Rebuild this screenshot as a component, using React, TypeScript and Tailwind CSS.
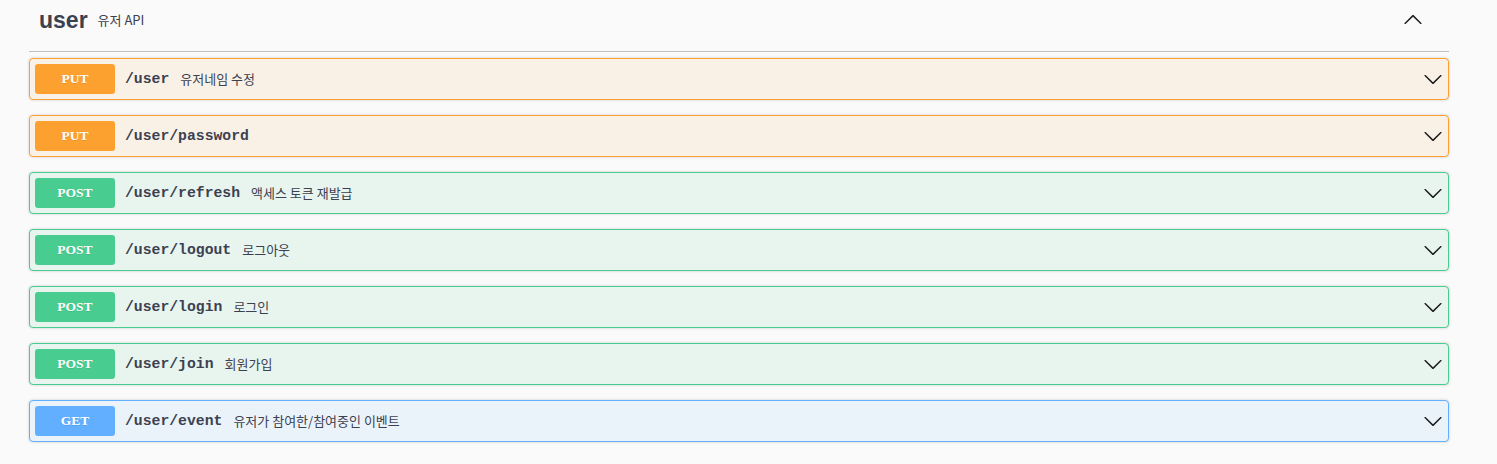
import { ReactNode } from 'react'

type Method = 'PUT' | 'POST' | 'GET'

const ops: { method: Method; path: string; summary?: string }[] = [
  { method: 'PUT', path: '/user', summary: '유저네임 수정' },
  { method: 'PUT', path: '/user/password' },
  { method: 'POST', path: '/user/refresh', summary: '액세스 토큰 재발급' },
  { method: 'POST', path: '/user/logout', summary: '로그아웃' },
  { method: 'POST', path: '/user/login', summary: '로그인' },
  { method: 'POST', path: '/user/join', summary: '회원가입' },
  { method: 'GET', path: '/user/event', summary: '유저가 참여한/참여중인 이벤트' },
]

const styles: Record<Method, { row: string; badge: string }> = {
  PUT: { row: 'border-[#fca130] bg-[#faf1e6]', badge: 'bg-[#fca130]' },
  POST: { row: 'border-[#49cc90] bg-[#e8f5ef]', badge: 'bg-[#49cc90]' },
  GET: { row: 'border-[#61affe] bg-[#ebf3fa]', badge: 'bg-[#61affe]' },
}

function Arrow({ up = false }: { up?: boolean }) {
  return (
    <svg width="20" height="20" viewBox="0 0 20 20" className={up ? 'rotate-180' : ''} fill="#1b1b1b">
      <path d="M17.418 6.109c.272-.268.709-.268.979 0s.271.701 0 .969l-7.908 7.83c-.27.268-.707.268-.979 0l-7.908-7.83c-.27-.268-.27-.701 0-.969.271-.268.709-.268.979 0L10 13.25l7.418-7.141z" />
    </svg>
  )
}

function OpRow({ method, path, summary }: { method: Method; path: string; summary?: string }): ReactNode {
  const s = styles[method]
  return (
    <div className={`flex h-[42px] items-center rounded-[4px] border p-[5px] shadow-[0_0_3px_rgba(0,0,0,0.19)] ${s.row}`}>
      <span
        className={`flex h-[30px] w-[80px] shrink-0 items-center justify-center rounded-[3px] font-['Liberation_Serif',serif] text-[13.5px] font-bold text-white [text-shadow:0_1px_0_rgba(0,0,0,0.1)] ${s.badge}`}
      >
        {method}
      </span>
      <span className="ml-[10px] font-['Liberation_Mono',monospace] text-[14.75px] font-bold text-[#3b4151]">{path}</span>
      {summary && (
        <span className="ml-[11px] font-['Noto_Sans_CJK_KR',sans-serif] text-[13px] text-[#3b4151]">{summary}</span>
      )}
      <span className="ml-auto flex">
        <Arrow />
      </span>
    </div>
  )
}

export default function App() {
  return (
    <div className="min-h-[464px] w-full bg-[#fafafa]">
      <div className="ml-[29px] w-[1420px]">
        <div className="flex h-[52px] items-center border-b border-[rgba(59,65,81,0.3)] pb-[11px] pl-[10px] pr-[26px]">
          <span className="font-['Liberation_Sans',sans-serif] text-[23px] font-bold text-[#3b4151]">user</span>
          <span className="ml-[10px] font-['Noto_Sans_CJK_KR',sans-serif] text-[13px] text-[#3b4151]">유저 API</span>
          <span className="ml-auto flex">
            <Arrow up />
          </span>
        </div>
        <div className="mt-[6px] flex flex-col gap-[15px]">
          {ops.map((o) => (
            <OpRow key={o.method + o.path} {...o} />
          ))}
        </div>
      </div>
    </div>
  )
}
